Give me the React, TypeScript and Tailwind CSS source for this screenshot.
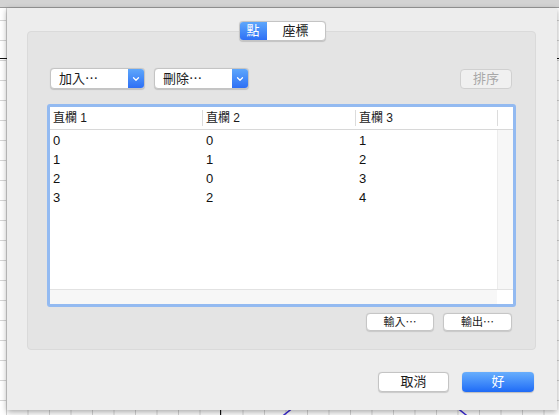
import { ChevronDown } from "lucide-react"

const rows = [
  ["0", "0", "1"],
  ["1", "1", "2"],
  ["2", "0", "3"],
  ["3", "2", "4"],
]

function PopUp({ label }: { label: string }) {
  return (
    <div className="flex h-[21px] w-[95px] overflow-hidden rounded-[4px] border border-[#c4c4c4] bg-white shadow-[0_0.5px_1px_rgba(0,0,0,0.15)]">
      <div className="flex flex-1 items-center pl-[8px] text-[13px] text-[#1a1a1a]">{label}</div>
      <div className="flex w-[16px] items-center justify-center bg-gradient-to-b from-[#5ea6fb] to-[#2f6ff5]">
        <ChevronDown className="h-[10px] w-[10px] text-white" strokeWidth={3} />
      </div>
    </div>
  )
}

function SmallButton({ label, className = "" }: { label: string; className?: string }) {
  return (
    <div className={`flex items-center justify-center rounded-[4px] border border-[#c6c6c6] bg-white text-[11px] text-[#1a1a1a] shadow-[0_0.5px_1px_rgba(0,0,0,0.12)] ${className}`}>
      {label}
    </div>
  )
}

export default function App() {
  return (
    <div
      className="relative h-[415px] w-[559px] overflow-hidden bg-white bg-[linear-gradient(to_right,#d4d4d4_1px,transparent_1px),linear-gradient(to_bottom,#d4d4d4_1px,transparent_1px)] bg-[size:21.5px_20px] bg-[position:6px_0px]"
      style={{ fontFamily: '"Liberation Sans", "Noto Sans CJK TC", sans-serif' }}
    >
      {/* graph drawn behind the sheet: axes and a circle */}
      <svg className="absolute left-0 top-0" width="559" height="415">
        <line x1="0" y1="58.5" x2="559" y2="58.5" stroke="#111" strokeWidth="1" />
        <line x1="220.5" y1="0" x2="220.5" y2="415" stroke="#111" strokeWidth="1" />
        <circle cx="375" cy="520" r="139" fill="none" stroke="#3b2bd6" strokeWidth="1.5" />
      </svg>

      {/* window toolbar strip above the sheet */}
      <div className="relative h-[8px] w-full border-b border-[#9a9a9a] bg-[#d3d3d3]" />

      <div className="relative ml-[7px] flex h-[402px] w-[550px] flex-col bg-[#ededed] shadow-[0_2px_6px_rgba(0,0,0,0.35)]">
        {/* segmented control */}
        <div className="relative z-10 mx-auto mt-[13px] flex h-[20px] overflow-hidden rounded-[4px] border border-[#c4c4c4] bg-white text-[13px] shadow-[0_0.5px_1px_rgba(0,0,0,0.15)]">
          <div className="flex w-[27px] items-center justify-center bg-gradient-to-b from-[#5ea6fb] to-[#2f6ff5] text-white">點</div>
          <div className="flex w-[58px] items-center justify-center text-[#1a1a1a]">座標</div>
        </div>

        {/* group box */}
        <div className="ml-[20px] mt-[-10px] flex h-[319px] w-[509px] flex-col rounded-[4px] border border-[#dadada] bg-[#e4e4e4]">
          <div className="mt-[36px] flex items-center px-[22px]">
            <PopUp label="加入⋯" />
            <div className="ml-[9px]">
              <PopUp label="刪除⋯" />
            </div>
            <div className="ml-auto mr-[1px] flex h-[20px] w-[52px] items-center justify-center rounded-[4px] border border-[#d0d0d0] bg-[#f0f0f0] text-[13px] text-[#a8a8a8]">
              排序
            </div>
          </div>

          {/* table with focus ring */}
          <div className="ml-[19px] mt-[15px] flex h-[203px] w-[469px] flex-col rounded-[3px] border-[3px] border-[#93baf1] bg-white">
            <div className="flex h-[23px] border-b border-[#d8d8d8] text-[12px] text-[#1a1a1a]">
              <div className="flex w-[152px] items-center pl-[3px]">直欄 1</div>
              <div className="my-[3px] w-px bg-[#dcdcdc]" />
              <div className="flex w-[152px] items-center pl-[3px]">直欄 2</div>
              <div className="my-[3px] w-px bg-[#dcdcdc]" />
              <div className="flex w-[141px] items-center pl-[3px]">直欄 3</div>
              <div className="my-[3px] w-px bg-[#dcdcdc]" />
              <div className="flex-1" />
            </div>
            <div className="flex flex-1">
              <div className="flex w-[447px] flex-col pt-[1px] text-[13px] text-[#111]">
                {rows.map((r, i) => (
                  <div key={i} className="flex h-[19px] items-center">
                    <div className="w-[153px] pl-[3px]">{r[0]}</div>
                    <div className="w-[153px] pl-[3px]">{r[1]}</div>
                    <div className="pl-[3px]">{r[2]}</div>
                  </div>
                ))}
              </div>
              <div className="flex-1 border-l border-[#ececec] bg-[#f7f7f7]" />
            </div>
            <div className="flex h-[15px] border-t border-[#e2e2e2]">
              <div className="w-[447px] bg-[#f7f7f7]" />
              <div className="flex-1 bg-white" />
            </div>
          </div>

          <div className="mt-[6px] flex justify-end gap-[9px] pr-[23px]">
            <SmallButton label="輸入⋯" className="h-[18px] w-[68px]" />
            <SmallButton label="輸出⋯" className="h-[18px] w-[69px]" />
          </div>
        </div>

        {/* dialog buttons */}
        <div className="mt-[22px] flex justify-end gap-[13px] pr-[23px]">
          <div className="flex h-[20px] w-[71px] items-center justify-center rounded-[4px] border border-[#c4c4c4] bg-white text-[13px] text-[#1a1a1a] shadow-[0_0.5px_1px_rgba(0,0,0,0.15)]">
            取消
          </div>
          <div className="flex h-[20px] w-[72px] items-center justify-center rounded-[4px] bg-gradient-to-b from-[#68aefc] to-[#1f6af6] text-[13px] text-white shadow-[0_0.5px_1px_rgba(0,0,0,0.2)]">
            好
          </div>
        </div>
      </div>
    </div>
  )
}
